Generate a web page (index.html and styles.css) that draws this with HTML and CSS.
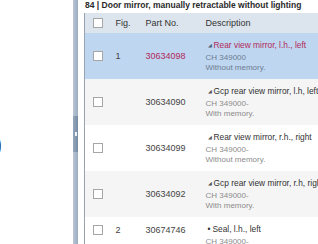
FILE: index.html
```html
<!DOCTYPE html>
<html lang="en">

<head>
    <meta charset="UTF-8">
    <meta name="viewport" content="width=device-width, initial-scale=1.0">
    <title>Parts</title>
    <link rel="stylesheet" href="styles.css">
</head>

<body>
    <div class="page">
        <div class="side">
            <span class="cut">9</span>
        </div>

        <div class="scroll">
            <div class="thumb"><span class="grip"></span></div>
        </div>

        <div class="panel">
            <div class="title">84 | Door mirror, manually retractable without lighting</div>

            <table class="parts">
                <colgroup>
                    <col class="col-chk">
                    <col class="col-fig">
                    <col class="col-no">
                    <col class="col-desc">
                </colgroup>
                <thead>
                    <tr>
                        <th class="chk"><span class="box"></span></th>
                        <th>Fig.</th>
                        <th>Part No.</th>
                        <th>Description</th>
                    </tr>
                </thead>
                <tbody>
                    <tr class="selected">
                        <td class="chk"><span class="box"></span></td>
                        <td>1</td>
                        <td class="no">30634098</td>
                        <td class="desc">
                            <div class="d-title"><span class="arrow">&#9698;</span>Rear view mirror, l.h., left</div>
                            <div class="d-sub">CH 349000</div>
                            <div class="d-sub">Without memory.</div>
                        </td>
                    </tr>
                    <tr class="alt">
                        <td class="chk"><span class="box"></span></td>
                        <td></td>
                        <td class="no">30634090</td>
                        <td class="desc">
                            <div class="d-title"><span class="arrow">&#9698;</span>Gcp rear view mirror, l.h, left</div>
                            <div class="d-sub">CH 349000-</div>
                            <div class="d-sub">With memory.</div>
                        </td>
                    </tr>
                    <tr>
                        <td class="chk"><span class="box"></span></td>
                        <td></td>
                        <td class="no">30634099</td>
                        <td class="desc">
                            <div class="d-title"><span class="arrow">&#9698;</span>Rear view mirror, r.h., right</div>
                            <div class="d-sub">CH 349000-</div>
                            <div class="d-sub">Without memory.</div>
                        </td>
                    </tr>
                    <tr class="alt">
                        <td class="chk"><span class="box"></span></td>
                        <td></td>
                        <td class="no">30634092</td>
                        <td class="desc">
                            <div class="d-title"><span class="arrow">&#9698;</span>Gcp rear view mirror, r.h, right</div>
                            <div class="d-sub">CH 349000-</div>
                            <div class="d-sub">With memory.</div>
                        </td>
                    </tr>
                    <tr class="last">
                        <td class="chk"><span class="box"></span></td>
                        <td>2</td>
                        <td class="no">30674746</td>
                        <td class="desc">
                            <div class="d-title"><span class="dot">&bull;</span>Seal, l.h., left</div>
                            <div class="d-sub">CH 349000-</div>
                        </td>
                    </tr>
                </tbody>
            </table>
        </div>
    </div>
</body>

</html>
```

FILE: styles.css
```css
/* base */
body {
    margin: 0;
    background: #fff;
    font-family: 'Liberation Sans', Arial, sans-serif;
    color: #333;
    overflow: hidden;
}

.page {
    display: flex;
    height: 244px;
    width: 318px;
    overflow: hidden;
}

/* left strip, only the edge of a glyph shows */
.side {
    width: 73px;
    flex-shrink: 0;
    overflow: hidden;
}

.cut {
    display: block;
    margin: 128px 0 0 -17px;
    font-size: 34px;
    font-weight: bold;
    color: #222;
    line-height: 36px;
}

/* scrollbar */
.scroll {
    width: 5px;
    flex-shrink: 0;
    background: linear-gradient(to right, #b9c7d5, #9badc1);
    margin-right: 6px;
}

.thumb {
    margin-top: 116px;
    height: 36px;
    background: linear-gradient(to right, #93a7bd, #768ba3);
    display: flex;
    align-items: center;
    justify-content: center;
}

.grip {
    width: 2px;
    height: 4px;
    background: #eef3f8;
}

/* panel */
.panel {
    width: 280px;
    flex-shrink: 0;
}

.title {
    font-size: 8.5px;
    font-weight: bold;
    color: #2a2a2a;
    line-height: 11px;
    height: 13px;
    white-space: nowrap;
    padding-left: 1px;
}

.parts {
    border-collapse: collapse;
    table-layout: fixed;
    width: 280px;
    border-left: 1px solid #97a3b1;
}

.col-chk {
    width: 25px;
}

.col-fig {
    width: 30px;
}

.col-no {
    width: 60px;
}

.parts th {
    height: 20px;
    padding: 0 0 0 6px;
    background: #dce4ed;
    font-size: 9px;
    font-weight: normal;
    color: #333;
    text-align: left;
}

.parts td {
    padding: 0 0 0 6px;
    font-size: 9px;
    color: #444;
    vertical-align: middle;
    white-space: nowrap;
}

.parts .chk {
    padding: 0 0 0 8px;
}

.box {
    display: block;
    width: 8px;
    height: 8px;
    border: 1px solid #a6a6a6;
    background: #fff;
}

.parts tr.alt td {
    background: #f5f5f5;
}

.parts tr.selected td {
    background: #bfd6f0;
}

.parts td.desc {
    padding: 6px 0 7px 6px;
    font-size: 8.4px;
}

.d-title {
    line-height: 12px;
    margin-bottom: 2px;
    color: #333;
}

.d-sub {
    font-size: 8px;
    line-height: 9.5px;
    color: #8c8c8c;
}

.arrow {
    display: inline-block;
    font-size: 5px;
    margin: 0 2px 0 2px;
    color: #555;
    vertical-align: 1px;
}

.dot {
    margin: 0 2px 0 2px;
}

/* selected row colours */
.selected .no,
.selected .d-title {
    color: #b02a5b;
}

.selected .d-sub {
    color: #6c7d90;
}

.selected .arrow {
    color: #4c5f78;
}

.last td {
    vertical-align: top;
}

.last td.chk,
.last td:nth-child(2),
.last td.no {
    padding-top: 8px;
}
```
